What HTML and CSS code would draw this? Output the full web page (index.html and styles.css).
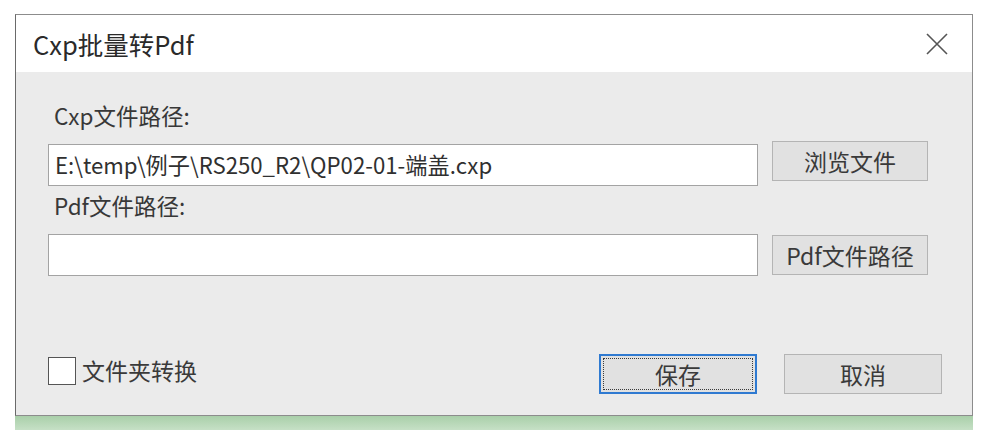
FILE: index.html
```html
<!DOCTYPE html>
<html lang="zh-CN">
<head>
<meta charset="utf-8">
<title>Cxp批量转Pdf</title>
<link rel="stylesheet" href="styles.css">
</head>
<body>
<div class="window">
  <div class="dialog">
    <div class="titlebar">
      <span class="title">Cxp批量转Pdf</span>
      <span class="close" aria-label="关闭">
        <svg width="22" height="22" viewBox="0 0 22 22"><path d="M1 1 L21 21 M21 1 L1 21" stroke="#555" stroke-width="1.6" fill="none"/></svg>
      </span>
    </div>
    <div class="content">
      <div class="label label-first">Cxp文件路径:</div>
      <div class="row">
        <div class="input input-top">E:\temp\例子\RS250_R2\QP02-01-端盖.cxp</div>
        <button class="btn btn-side">浏览文件</button>
      </div>
      <div class="label">Pdf文件路径:</div>
      <div class="row">
        <div class="input"></div>
        <button class="btn btn-side btn-low">Pdf文件路径</button>
      </div>
      <div class="footer">
        <label class="check"><span class="box"></span><span class="check-text">文件夹转换</span></label>
        <div class="actions">
          <button class="btn btn-action btn-default">保存</button>
          <button class="btn btn-action">取消</button>
        </div>
      </div>
    </div>
  </div>
  <div class="strip"></div>
</div>
</body>
</html>
```

FILE: styles.css
```css
* { box-sizing: border-box; }
html, body { margin: 0; padding: 0; background: #ffffff; }
body {
  font-family: "Noto Sans CJK SC", "Noto Sans", sans-serif;
  color: #383838;
}
.window {
  padding-top: 14px;
  padding-left: 15px;
  width: 973px;
}
.dialog {
  width: 958px;
  border: 1px solid #8c8c8c;
  border-left-color: #6a6a6a;
  background: #ebebeb;
}
.titlebar {
  height: 57px;
  background: #ffffff;
  display: flex;
  align-items: center;
  justify-content: space-between;
  padding-left: 17px;
  padding-right: 24px;
}
.title {
  font-size: 25.5px;
  color: #2a2a2a;
  line-height: 1;
}
.close { display: flex; align-items: center; }
.content {
  padding: 0 30px 21px 32px;
}
.label {
  height: 30px;
  line-height: 21px;
  font-size: 22.5px;
  padding-left: 6px;
  color: #383838;
  margin-top: 9px;
  margin-bottom: 9px;
}
.label-first { margin-top: 33px; margin-bottom: 6px; }
.row {
  display: flex;
  align-items: flex-start;
  gap: 14px;
}
.input {
  width: 710px;
  height: 42px;
  background: #fff;
  border: 1px solid #a3a3a3;
  font-size: 22.2px;
  line-height: 38px;
  padding-left: 6px;
  color: #303030;
  white-space: nowrap;
}
.input-top { margin-top: 3px; }
.btn {
  font-family: inherit;
  background: #e1e1e1;
  border: 1px solid #b4b4b4;
  color: #3a3a3a;
  font-size: 23px;
  line-height: 1;
  padding: 0;
  margin: 0;
}
.btn-side { width: 156px; height: 40px; }
.btn-low { margin-top: 1px; }
.footer {
  margin-top: 78px;
  display: flex;
  align-items: center;
  justify-content: space-between;
  height: 40px;
}
.check { display: flex; align-items: center; gap: 6px; margin-top: -7px; }
.box {
  width: 28px;
  height: 28px;
  background: #fff;
  border: 1px solid #555;
}
.check-text { font-size: 23px; color: #3a3a3a; line-height: 1; }
.actions { display: flex; gap: 27px; }
.btn-action { width: 158px; height: 40px; }
.btn-default {
  border: 2px solid #2f7ad1;
  outline: 1px dotted #3a3a3a;
  outline-offset: -5px;
}
.strip {
  width: 958px;
  height: 14px;
  background: linear-gradient(#a9cfa9, #c6e0c6);
}
```
